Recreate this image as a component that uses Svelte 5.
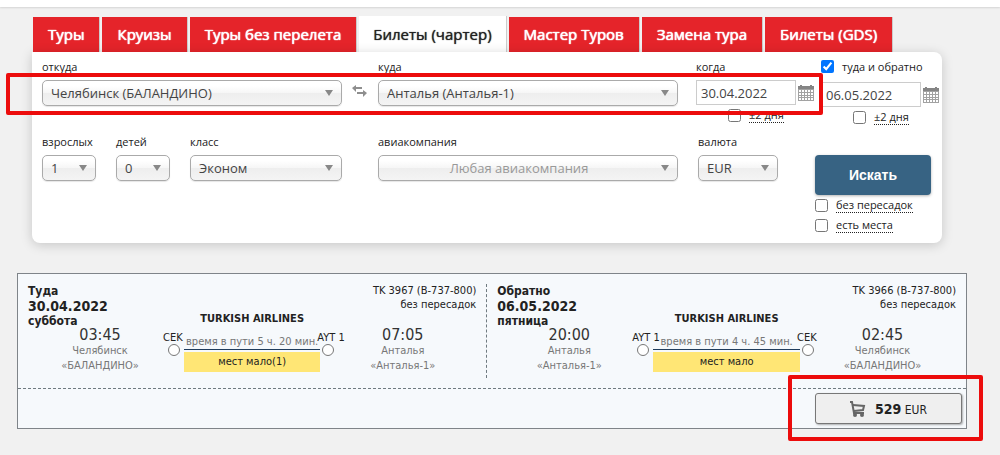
<script lang="ts">
	type Stop = { time: string; city: string; airport: string; code: string };
	type Leg = {
		title: string;
		date: string;
		weekday: string;
		flight: string;
		transfers: string;
		airline: string;
		duration: string;
		seats: string;
		from: Stop;
		to: Stop;
	};

	const tabs = [
		'Туры',
		'Круизы',
		'Туры без перелета',
		'Билеты (чартер)',
		'Мастер Туров',
		'Замена тура',
		'Билеты (GDS)'
	];
	let activeTab = $state('Билеты (чартер)');

	let departDate = $state('30.04.2022');
	let returnDate = $state('06.05.2022');
	let roundTrip = $state(true);

	const legs: Leg[] = [
		{
			title: 'Туда',
			date: '30.04.2022',
			weekday: 'суббота',
			flight: 'TK 3967 (B-737-800)',
			transfers: 'без пересадок',
			airline: 'TURKISH AIRLINES',
			duration: 'время в пути 5 ч. 20 мин.',
			seats: 'мест мало(1)',
			from: { time: '03:45', city: 'Челябинск', airport: '«БАЛАНДИНО»', code: 'CEK' },
			to: { time: '07:05', city: 'Анталья', airport: '«Анталья-1»', code: 'AYT 1' }
		},
		{
			title: 'Обратно',
			date: '06.05.2022',
			weekday: 'пятница',
			flight: 'TK 3966 (B-737-800)',
			transfers: 'без пересадок',
			airline: 'TURKISH AIRLINES',
			duration: 'время в пути 4 ч. 45 мин.',
			seats: 'мест мало',
			from: { time: '20:00', city: 'Анталья', airport: '«Анталья-1»', code: 'AYT 1' },
			to: { time: '02:45', city: 'Челябинск', airport: '«БАЛАНДИНО»', code: 'CEK' }
		}
	];
</script>

{#snippet picker(id: string, label: string, options: string[], muted = false)}
	<div class="field">
		<label for={id}>{label}</label>
		<div class="select" class:muted>
			<select {id}>
				{#each options as option}
					<option>{option}</option>
				{/each}
			</select>
		</div>
	</div>
{/snippet}

{#snippet calendar(label: string)}
	<button class="icon-button" type="button" aria-label={label}>
		<svg width="16" height="18" viewBox="0 0 16 18">
			<path fill="#a2a2a2" d="M0 2h16v15H0z" />
			<path fill="#858585" d="M0 2h16v3H0zM2 1h2v2H2zM12 1h2v2h-2z" />
			<path
				fill="#fff"
				d="M1 6h2v2H1zM4 6h2v2H4zM7 6h2v2H7zM10 6h2v2h-2zM13 6h2v2h-2zM1 9h2v2H1zM4 9h2v2H4zM7 9h2v2H7zM10 9h2v2h-2zM13 9h2v2h-2zM1 12h2v1H1zM4 12h2v1H4zM7 12h2v1H7zM10 12h2v1h-2zM13 12h2v1h-2zM1 14h2v2H1zM4 14h2v2H4zM7 14h2v2H7zM10 14h2v2h-2zM13 14h2v2h-2z"
			/>
		</svg>
	</button>
{/snippet}

{#snippet stopInfo(stop: Stop)}
	<div class="stop">
		<div class="time">{stop.time}</div>
		<div>{stop.city}</div>
		<div>{stop.airport}</div>
	</div>
{/snippet}

{#snippet station(code: string)}
	<div class="station">
		<span>{code}</span>
		<i></i>
	</div>
{/snippet}

<main>
	<div class="top"></div>

	<section class="search">
		<nav>
			{#each tabs as tab}
				<a href="#search" class:active={tab === activeTab} onclick={() => (activeTab = tab)}>{tab}</a>
			{/each}
		</nav>

		<form class="panel" id="search" onsubmit={(e) => e.preventDefault()}>
			<div class="fields">
				<div class="row route">
					{@render picker('from', 'откуда', ['Челябинск (БАЛАНДИНО)'])}
					<button class="icon-button swap" type="button" aria-label="Поменять местами">
						<svg width="16" height="12" viewBox="0 0 16 12" fill="#8e8e8e">
							<path d="M4 0v2h6v2H4v3L0 3z" />
							<path d="M11 5v2H5v2h6v3l4-4z" />
						</svg>
					</button>
					{@render picker('to', 'куда', ['Анталья (Анталья-1)'])}
					<div class="when">
						<label for="depart">когда</label>
						<div class="date">
							<input id="depart" type="text" bind:value={departDate} />
							{@render calendar('Выбрать дату вылета')}
						</div>
						<label class="check flex-days"><input type="checkbox" /><span>±2 дня</span></label>
					</div>
				</div>

				<div class="row">
					<div class="people">
						{@render picker('adults', 'взрослых', ['1', '2', '3', '4'])}
						{@render picker('children', 'детей', ['0', '1', '2', '3'])}
						{@render picker('class', 'класс', ['Эконом', 'Бизнес'])}
					</div>
					<div></div>
					{@render picker('airline', 'авиакомпания', ['Любая авиакомпания'], true)}
					<div class="currency">
						{@render picker('currency', 'валюта', ['EUR', 'USD', 'RUB'])}
					</div>
				</div>
			</div>

			<div class="side">
				<div class="return">
					<label class="check plain">
						<input type="checkbox" bind:checked={roundTrip} /><span>туда и обратно</span>
					</label>
					<div class="date">
						<input type="text" aria-label="обратно" bind:value={returnDate} />
						{@render calendar('Выбрать дату возвращения')}
					</div>
					<label class="check flex-days"><input type="checkbox" /><span>±2 дня</span></label>
				</div>
				<button class="submit" type="submit">Искать</button>
				<label class="check"><input type="checkbox" /><span>без пересадок</span></label>
				<label class="check"><input type="checkbox" /><span>есть места</span></label>
			</div>

			<div class="mark mark-route"></div>
		</form>
	</section>

	<article class="ticket">
		<div class="legs">
			{#each legs as leg}
				<section class="leg">
					<div class="departure">
						<header>
							<div>{leg.title}</div>
							<div class="day">{leg.date}</div>
							<div>{leg.weekday}</div>
						</header>
						<div class="point">
							{@render stopInfo(leg.from)}
							{@render station(leg.from.code)}
						</div>
					</div>
					<div class="flight">
						<div class="airline">{leg.airline}</div>
						<div class="duration">{leg.duration}</div>
						<div class="seats">{leg.seats}</div>
					</div>
					<div class="arrival">
						<header>
							<div>{leg.flight}</div>
							<div>{leg.transfers}</div>
						</header>
						<div class="point">
							{@render station(leg.to.code)}
							{@render stopInfo(leg.to)}
						</div>
					</div>
				</section>
			{/each}
		</div>
		<footer>
			<div class="price">
				<button type="button">
					<svg width="16" height="16" viewBox="0 0 16 16" fill="none" stroke="#666" stroke-width="2">
						<path d="M0 1h2l2 11h10" />
						<path d="M3 4l11 1-1 4-9 1" />
						<g fill="#666" stroke="none">
							<circle cx="5" cy="14" r="2" />
							<circle cx="12" cy="14" r="2" />
						</g>
					</svg>
					<span><b>529</b> EUR</span>
				</button>
				<div class="mark mark-price"></div>
			</div>
		</footer>
	</article>
</main>

<style>
	:global(body) {
		background: #f1f1f1;
	}
	main {
		padding-bottom: 26px;
	}
	.top {
		height: 7px;
		background: #fff;
		box-shadow: 0 1px 2px rgba(0, 0, 0, 0.12);
	}
	.search {
		margin: 9px 58px 0 32px;
		font-family: 'Open Sans', sans-serif;
		font-size: 11px;
		line-height: 16px;
		color: #222;
	}

	nav {
		display: flex;
		gap: 2px;
		padding-left: 1px;
	}
	nav a {
		margin-top: 1px;
		padding: 0 15px;
		border-right: 1px solid #ccc;
		background: #e5242a;
		color: #fff;
		font-size: 15px;
		line-height: 35px;
		text-decoration: none;
		text-shadow:
			0 0 1px currentColor,
			0 0 1px currentColor;
		white-space: nowrap;
	}
	nav a.active {
		margin-top: 0;
		padding: 1px 14px 0;
		background: #fff;
		color: #222;
		text-shadow: 0 0 1px currentColor;
	}

	.panel {
		position: relative;
		display: flex;
		padding: 7px 0 6px 10px;
		border-radius: 0 8px 8px 8px;
		background: #fff;
		box-shadow: 0 2px 12px rgba(0, 0, 0, 0.18);
	}
	.fields {
		flex: 1;
	}
	.row {
		display: grid;
		grid-template-columns: 1fr 36px 1fr 137px;
	}
	.route {
		height: 75px;
	}
	.field,
	.when {
		display: flex;
		flex-direction: column;
		gap: 5px;
	}
	.when {
		padding-left: 18px;
	}
	.select {
		position: relative;
	}
	.select::after {
		content: '';
		position: absolute;
		top: 10px;
		right: 9px;
		border: 4px solid transparent;
		border-top: 6px solid #888;
		border-bottom: 0;
		pointer-events: none;
	}
	select {
		display: block;
		width: 100%;
		height: 26px;
		padding: 0 8px;
		border: 1px solid #aaa;
		border-radius: 5px;
		appearance: none;
		background: linear-gradient(#fff 20%, #f6f6f6 50%, #eee 52%, #f4f4f4 100%);
		box-shadow: 0 1px 1px rgba(0, 0, 0, 0.1);
		color: #444;
		font: 13px 'Open Sans', sans-serif;
	}
	.muted select {
		padding-right: 26px;
		color: #999;
		text-align: center;
		text-align-last: center;
	}
	.people {
		display: grid;
		grid-template-columns: 54px 54px 1fr;
		gap: 20px;
	}
	.currency {
		width: 80px;
		padding-left: 20px;
	}

	.icon-button {
		padding: 0;
		border: 0;
		background: none;
		line-height: 0;
		cursor: pointer;
	}
	.swap {
		align-self: start;
		padding-top: 26px;
	}
	.date {
		display: flex;
		align-items: center;
		gap: 2px;
	}
	.date input {
		box-sizing: border-box;
		width: 100px;
		height: 25px;
		padding: 0 4px;
		border: 1px solid #ccc;
		color: #444;
		font: 13px 'Open Sans', sans-serif;
	}

	.check {
		display: flex;
		align-items: center;
		gap: 8px;
		margin-bottom: 4px;
	}
	.check input {
		width: 13px;
		height: 13px;
		margin: 0;
	}
	.check span {
		border-bottom: 1px dotted #222;
		line-height: 15px;
	}
	.plain span {
		border: 0;
	}
	.flex-days {
		padding-left: 32px;
	}
	.when .flex-days {
		margin-top: -3px;
	}
	.side {
		width: 127px;
	}
	.return {
		height: 96px;
		padding-left: 6px;
	}
	.return .plain {
		margin-bottom: 8px;
	}
	.return .flex-days {
		margin-top: 2px;
	}
	.submit {
		width: 116px;
		height: 40px;
		margin-bottom: 2px;
		border: 0;
		border-radius: 4px;
		background: #376383;
		box-shadow: 0 1px 3px rgba(0, 0, 0, 0.3);
		color: #fff;
		font: bold 14px 'Liberation Sans', sans-serif;
	}

	/* red frames that call attention to the route and the price */
	.mark {
		position: absolute;
		border: 4px solid #ec0c0c;
		border-radius: 2px;
		pointer-events: none;
	}
	.mark-route {
		top: 21px;
		right: 119px;
		left: -26px;
		height: 34px;
	}
	.mark-price {
		inset: -18px -21px -17px -27px;
	}

	.ticket {
		margin: 30px 33px 0 17px;
		border: 1px solid #7f8489;
		background: #f6f9fc;
		font-family: 'DejaVu Sans Condensed', 'DejaVu Sans', sans-serif;
		font-size: 11px;
		line-height: 15px;
		color: #222;
	}
	.legs {
		display: flex;
		padding: 10px 0;
		border-bottom: 1px dashed #6f7a80;
	}
	.leg {
		display: flex;
		flex: 1;
		height: 94px;
	}
	.leg:first-child {
		flex: 0 0 auto;
		width: 49.4%;
		border-right: 1px dashed #6f7a80;
	}
	.departure {
		width: 166px;
	}
	.arrival {
		width: 169px;
		margin-left: -3px;
	}
	.flight {
		flex: 1;
		padding-top: 27px;
		text-align: center;
		white-space: nowrap;
	}
	.leg header {
		height: 43px;
	}
	.departure header {
		padding-left: 10px;
		font-size: 12px;
		font-weight: bold;
	}
	.departure .day {
		font-size: 14px;
	}
	.arrival header {
		padding-right: 10px;
		line-height: 14px;
		text-align: right;
	}
	.point {
		display: flex;
	}
	.stop {
		flex: 1;
		color: #777;
		text-align: center;
	}
	.departure .stop {
		padding-left: 19px;
	}
	.arrival .stop {
		padding-right: 19px;
	}
	.stop .time {
		color: #333;
		font-size: 16px;
		line-height: 16px;
	}
	.station {
		width: 21px;
		padding-top: 5px;
		line-height: 12px;
		white-space: nowrap;
	}
	.station i {
		display: block;
		box-sizing: border-box;
		width: 12px;
		height: 12px;
		margin-left: 5px;
		border: 1px solid #777;
		border-radius: 50%;
		background: #fff;
	}
	.airline {
		font-weight: bold;
	}
	.duration {
		margin: 8px 0 2px;
		border-bottom: 1px solid #1f3c5c;
		color: #777;
	}
	.seats {
		background: #ffe675;
		line-height: 20px;
	}

	footer {
		display: flex;
		justify-content: flex-end;
		padding: 4px;
	}
	.price {
		position: relative;
	}
	.price button {
		display: flex;
		align-items: center;
		justify-content: center;
		gap: 9px;
		width: 147px;
		height: 31px;
		border: 1px solid #777;
		border-radius: 3px;
		background: #efefef;
		box-shadow: 1px 1px 2px rgba(0, 0, 0, 0.3);
		color: #222;
		font: 12px 'DejaVu Sans Condensed', 'DejaVu Sans', sans-serif;
	}
	.price b {
		font-size: 14px;
	}
</style>
